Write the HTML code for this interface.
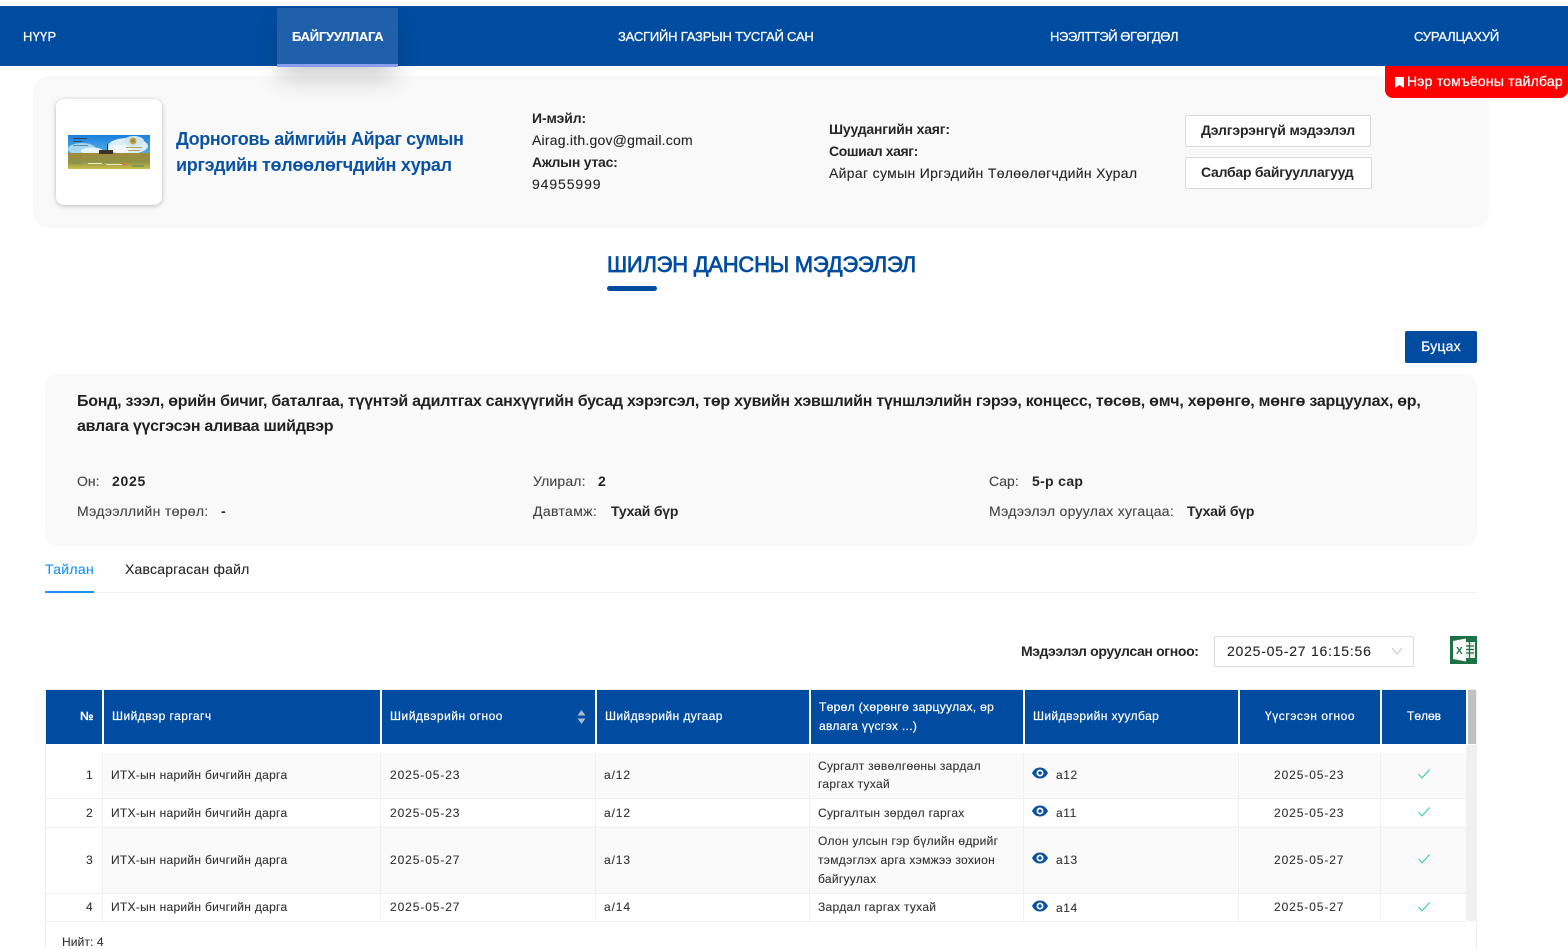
<!DOCTYPE html>
<html lang="mn"><head><meta charset="utf-8"><title>Шилэн данс</title>
<style>
html,body{margin:0;padding:0;background:#fff;width:1568px;height:949px;overflow:hidden}
body{position:relative;font-family:"Liberation Sans","DejaVu Sans",sans-serif;color:#262626;font-size:14px;-webkit-text-stroke:.12px currentColor}
.a{position:absolute}
.t{position:absolute;white-space:nowrap;line-height:20px}
.n{color:#fff;font-size:13px;top:27px;-webkit-text-stroke:.25px #fff;z-index:3}
.b{font-weight:bold;-webkit-text-stroke:0}
.th{position:absolute;top:690px;height:54px;background:#014ca0}
.h{position:absolute;color:#fff;font-size:12px;white-space:nowrap;line-height:19px;letter-spacing:.45px;-webkit-text-stroke:.2px #fff}
.d{position:absolute;font-size:12px;white-space:nowrap;line-height:19px;color:#333;letter-spacing:.29px}
.dt{letter-spacing:.9px}
.btn{position:absolute;background:#fff;border:1px solid #d9d9d9;border-radius:2px;box-sizing:border-box;font-weight:bold;font-size:14px;color:#262626;line-height:28px;white-space:nowrap;-webkit-text-stroke:0;padding-left:15px}
.v{position:absolute;width:1px;background:#f0f0f0}
.l{position:absolute;left:46px;width:1420px;height:1px;background:#f0f0f0}
.r{position:absolute;left:103px;width:1363px;background:#fafafa}
</style></head><body>

<div class="a" style="left:33px;top:76px;width:1456px;height:152px;background:#f9f9f9;border-radius:16px"></div>
<div class="a" style="left:0;top:6px;width:1568px;height:60px;background:#014ca0;z-index:1"></div>
<div class="a" style="left:277px;top:8px;width:121px;height:59px;background:#2060aa;border-bottom:3px solid #8a9ef5;box-sizing:border-box;box-shadow:0 14px 24px -2px rgba(0,0,0,.18);z-index:2"></div>
<div class="t n" style="left:23px;letter-spacing:.2px">НҮҮР</div>
<div class="t n b" style="left:292px;letter-spacing:-.25px;-webkit-text-stroke:.1px #fff">БАЙГУУЛЛАГА</div>
<div class="t n" style="left:618px;letter-spacing:-.2px">ЗАСГИЙН ГАЗРЫН ТУСГАЙ САН</div>
<div class="t n" style="left:1050px;letter-spacing:-.45px">НЭЭЛТТЭЙ ӨГӨГДӨЛ</div>
<div class="t n" style="left:1414px;letter-spacing:-.2px">СУРАЛЦАХУЙ</div>

<div class="a" style="left:1385px;top:66px;width:183px;height:32px;background:#fe0000;border-radius:0 0 8px 8px;z-index:2"></div>
<svg class="a" style="left:1395px;top:77px;z-index:3" width="9" height="11" viewBox="0 0 9 11"><path d="M0 0h9v11L4.500 8 0 11z" fill="#fff"/></svg>
<div class="t" style="left:1407px;top:71px;color:#fff;font-size:14px;letter-spacing:.2px;-webkit-text-stroke:.25px #fff;z-index:3">Нэр томъёоны тайлбар</div>

<div class="a" style="left:56px;top:99px;width:106px;height:106px;background:#fff;border-radius:8px;box-shadow:0 1px 5px rgba(0,0,0,.25)"></div>
<svg class="a" style="left:68px;top:135px" width="82" height="34" viewBox="0 0 82 34">
<defs><linearGradient id="s" x1="0" y1="0" x2="0" y2="1"><stop offset="0" stop-color="#1a80dc"/><stop offset="1" stop-color="#57b0e2"/></linearGradient>
<linearGradient id="g" x1="0" y1="0" x2="0" y2="1"><stop offset="0" stop-color="#a08a3c"/><stop offset=".55" stop-color="#8f9146"/><stop offset="1" stop-color="#cdbf48"/></linearGradient></defs>
<rect width="82" height="19" fill="url(#s)"/>
<ellipse cx="14" cy="14" rx="14" ry="6" fill="#a8d8ee"/><ellipse cx="24" cy="16" rx="11" ry="3.500" fill="#e9f4f8"/>
<ellipse cx="60" cy="11" rx="20" ry="8" fill="#dceef6"/><ellipse cx="52" cy="14" rx="12" ry="4" fill="#f2f8fa"/><ellipse cx="66" cy="6" rx="10" ry="5" fill="#cfe7f3"/>
<rect x="5" y="3" width="14" height="1" fill="#345"/><rect x="5" y="6" width="9" height="1" fill="#456"/><rect x="5" y="10" width="15" height="1" fill="#5a8ab0"/>
<rect y="18" width="82" height="16" fill="url(#g)"/>
<rect x="31" y="15" width="14" height="4" fill="#3a3428"/><rect x="39" y="9" width="1" height="7" fill="#3a3428"/>
<circle cx="65" cy="6" r="3.500" fill="#c9a43a"/><circle cx="65" cy="6" r="1.500" fill="#7c8a58"/>
<rect x="58" y="12" width="16" height="1" fill="#b5a05a"/><rect x="60" y="15" width="12" height="1" fill="#b5a05a"/>
<rect x="20" y="28" width="14" height="1" fill="#ecebd0"/><rect x="38" y="29" width="16" height="1" fill="#e7e6c8"/><rect x="54" y="28" width="4" height="2" fill="#d9773a"/><rect x="5" y="27" width="9" height="2" fill="#7d9a55"/><rect x="64" y="30" width="12" height="2" fill="#7d9a55"/>
</svg>

<div class="t b" style="left:176px;top:126px;font-size:18px;line-height:26px;color:#0a52a3;letter-spacing:-.4px">Дорноговь аймгийн Айраг сумын<br><span style="letter-spacing:-.3px">иргэдийн төлөөлөгчдийн хурал</span></div>

<div class="t b" style="left:532px;top:108px;letter-spacing:-.1px">И-мэйл:</div>
<div class="t" style="left:532px;top:130px;letter-spacing:.22px">Airag.ith.gov@gmail.com</div>
<div class="t b" style="left:532px;top:152px;letter-spacing:-.25px">Ажлын утас:</div>
<div class="t" style="left:532px;top:174px;letter-spacing:.9px">94955999</div>
<div class="t b" style="left:829px;top:119px;letter-spacing:-.2px">Шуудангийн хаяг:</div>
<div class="t b" style="left:829px;top:141px;letter-spacing:-.4px">Сошиал хаяг:</div>
<div class="t" style="left:829px;top:163px;letter-spacing:.32px">Айраг сумын Иргэдийн Төлөөлөгчдийн Хурал</div>
<div class="btn" style="left:1185px;top:115px;width:186px;height:32px;letter-spacing:-.17px">Дэлгэрэнгүй мэдээлэл</div>
<div class="btn" style="left:1185px;top:157px;width:187px;height:32px;letter-spacing:-.25px">Салбар байгууллагууд</div>

<div class="t" style="left:607px;top:252px;font-size:22px;line-height:26px;color:#014ca0;letter-spacing:-.25px;-webkit-text-stroke:.7px #014ca0">ШИЛЭН ДАНСНЫ МЭДЭЭЛЭЛ</div>
<div class="a" style="left:607px;top:286px;width:50px;height:5px;background:#014ca0;border-radius:3px"></div>

<div class="a" style="left:1405px;top:331px;width:72px;height:32px;background:#014ca0;border-radius:2px;color:#fff;font-size:14px;line-height:31px;text-align:center;letter-spacing:.2px;-webkit-text-stroke:.2px #fff">Буцах</div>

<div class="a" style="left:45px;top:374px;width:1432px;height:172px;background:#f9f9f9;border-radius:12px"></div>
<div class="t b" style="left:77px;top:389px;font-size:16px;line-height:25px;color:#222;letter-spacing:-.25px">Бонд, зээл, өрийн бичиг, баталгаа, түүнтэй адилтгах санхүүгийн бусад хэрэгсэл, төр хувийн хэвшлийн түншлэлийн гэрээ, концесс, төсөв, өмч, хөрөнгө, мөнгө зарцуулах, өр,<br>авлага үүсгэсэн аливаа шийдвэр</div>

<div class="t" style="left:77px;top:471px;color:#444">Он:</div><div class="t b" style="left:112px;top:471px;letter-spacing:.7px">2025</div>
<div class="t" style="left:533px;top:471px;color:#444;letter-spacing:.15px">Улирал:</div><div class="t b" style="left:598px;top:471px">2</div>
<div class="t" style="left:989px;top:471px;color:#444">Сар:</div><div class="t b" style="left:1032px;top:471px;letter-spacing:.3px">5-р сар</div>
<div class="t" style="left:77px;top:501px;color:#444;letter-spacing:.3px">Мэдээллийн төрөл:</div><div class="t b" style="left:221px;top:501px;letter-spacing:0">-</div>
<div class="t" style="left:533px;top:501px;color:#444;letter-spacing:.35px">Давтамж:</div><div class="t b" style="left:611px;top:501px;letter-spacing:-.2px">Тухай бүр</div>
<div class="t" style="left:989px;top:501px;color:#444;letter-spacing:.28px">Мэдээлэл оруулах хугацаа:</div><div class="t b" style="left:1187px;top:501px;letter-spacing:-.2px">Тухай бүр</div>

<div class="t" style="left:45px;top:559px;color:#1890ff;letter-spacing:.3px">Тайлан</div>
<div class="t" style="left:125px;top:559px;letter-spacing:.2px">Хавсаргасан файл</div>
<div class="a" style="left:45px;top:592px;width:1432px;height:1px;background:#f0f0f0"></div>
<div class="a" style="left:45px;top:591px;width:49px;height:2px;background:#1890ff"></div>

<div class="t b" style="left:1021px;top:641px;letter-spacing:-.35px">Мэдээлэл оруулсан огноо:</div>
<div class="a" style="left:1214px;top:636px;width:200px;height:31px;border:1px solid #d9d9d9;border-radius:2px;box-sizing:border-box"></div>
<div class="t" style="left:1227px;top:641px;letter-spacing:.77px">2025-05-27 16:15:56</div>
<svg class="a" style="left:1391px;top:647px" width="12" height="9" viewBox="0 0 12 9"><path d="M1 1l5 6 5-6" fill="none" stroke="#c4c4c4" stroke-width="1"/></svg>

<svg class="a" style="left:1450px;top:636px" width="27" height="28" viewBox="0 0 27 28">
<rect width="27" height="28" fill="#1f7246"/>
<rect x="15" y="6" width="10" height="16" fill="#e4efe8"/>
<path d="M16 10h8M16 13.500h8M16 17h8M19.500 6v16" stroke="#1f7246" stroke-width="1.200"/>
<path d="M3 5l13-2.500v23L3 23z" fill="#fff"/>
<text x="6" y="18" font-size="10" font-weight="bold" fill="#1f7246" font-family="Liberation Sans" style="-webkit-text-stroke:0">X</text>
</svg>

<!-- table frame -->
<div class="a" style="left:45px;top:689px;width:1432px;height:1px;background:#eee"></div>
<div class="a" style="left:45px;top:689px;width:1px;height:260px;background:#eee"></div>
<div class="a" style="left:1476px;top:689px;width:1px;height:260px;background:#eee"></div>

<div class="th" style="left:46px;width:56px"></div>
<div class="th" style="left:104px;width:276px"></div>
<div class="th" style="left:382px;width:213px"></div>
<div class="th" style="left:597px;width:212px"></div>
<div class="th" style="left:811px;width:212px"></div>
<div class="th" style="left:1025px;width:213px"></div>
<div class="th" style="left:1240px;width:140px"></div>
<div class="th" style="left:1382px;width:84px"></div>
<div class="a" style="left:1468px;top:690px;width:8px;height:54px;background:#c1c1c1"></div>
<div class="a" style="left:1466px;top:745px;width:10px;height:176px;background:#f0f0f0"></div>

<div class="h b" style="left:80px;top:707px;letter-spacing:0">№</div>
<div class="h" style="left:112px;top:707px">Шийдвэр гаргагч</div>
<div class="h" style="left:390px;top:707px;letter-spacing:.5px">Шийдвэрийн огноо</div>
<svg class="a" style="left:577px;top:710px" width="9" height="14" viewBox="0 0 9 14"><path d="M4.500 0L8.500 5.500H.5zM4.500 14L.5 8.500H8.500z" fill="#a9b9cf"/></svg>
<div class="h" style="left:605px;top:707px;letter-spacing:.4px">Шийдвэрийн дугаар</div>
<div class="h" style="left:819px;top:698px;letter-spacing:.33px">Төрөл (хөрөнгө зарцуулах, өр<br>авлага үүсгэх ...)</div>
<div class="h" style="left:1033px;top:707px;letter-spacing:.42px">Шийдвэрийн хуулбар</div>
<div class="h" style="left:1265px;top:707px;letter-spacing:.55px">Үүсгэсэн огноо</div>
<div class="h" style="left:1407px;top:707px;letter-spacing:0">Төлөв</div>

<!-- row backgrounds -->
<div class="r" style="top:753px;height:45px"></div>
<div class="r" style="top:828px;height:65px"></div>
<div class="l" style="top:798px"></div>
<div class="l" style="top:827px"></div>
<div class="l" style="top:893px"></div>
<div class="l" style="top:921px"></div>
<div class="v" style="left:102px;top:753px;height:168px"></div>
<div class="v" style="left:380px;top:753px;height:168px"></div>
<div class="v" style="left:595px;top:753px;height:168px"></div>
<div class="v" style="left:809px;top:753px;height:168px"></div>
<div class="v" style="left:1023px;top:753px;height:168px"></div>
<div class="v" style="left:1238px;top:753px;height:168px"></div>
<div class="v" style="left:1380px;top:753px;height:168px"></div>

<!-- row 1 -->
<div class="d" style="left:86px;top:766px">1</div>
<div class="d" style="left:111px;top:766px">ИТХ-ын нарийн бичгийн дарга</div>
<div class="d dt" style="left:390px;top:766px">2025-05-23</div>
<div class="d dt" style="left:604px;top:766px">а/12</div>
<div class="d" style="left:818px;top:757px;line-height:18px">Сургалт зөвөлгөөны зардал<br>гаргах тухай</div>
<div class="d" style="left:1056px;top:766px;letter-spacing:.6px">а12</div>
<div class="d dt" style="left:1274px;top:766px">2025-05-23</div>
<!-- row 2 -->
<div class="d" style="left:86px;top:804px">2</div>
<div class="d" style="left:111px;top:804px">ИТХ-ын нарийн бичгийн дарга</div>
<div class="d dt" style="left:390px;top:804px">2025-05-23</div>
<div class="d dt" style="left:604px;top:804px">а/12</div>
<div class="d" style="left:818px;top:804px">Сургалтын зөрдөл гаргах</div>
<div class="d" style="left:1056px;top:804px;letter-spacing:.6px">а11</div>
<div class="d dt" style="left:1274px;top:804px">2025-05-23</div>
<!-- row 3 -->
<div class="d" style="left:86px;top:851px">3</div>
<div class="d" style="left:111px;top:851px">ИТХ-ын нарийн бичгийн дарга</div>
<div class="d dt" style="left:390px;top:851px">2025-05-27</div>
<div class="d dt" style="left:604px;top:851px">а/13</div>
<div class="d" style="left:818px;top:832px">Олон улсын гэр бүлийн өдрийг<br>тэмдэглэх арга хэмжээ зохион<br>байгуулах</div>
<div class="d" style="left:1056px;top:851px;letter-spacing:.6px">а13</div>
<div class="d dt" style="left:1274px;top:851px">2025-05-27</div>
<!-- row 4 -->
<div class="d" style="left:86px;top:898px">4</div>
<div class="d" style="left:111px;top:898px">ИТХ-ын нарийн бичгийн дарга</div>
<div class="d dt" style="left:390px;top:898px">2025-05-27</div>
<div class="d dt" style="left:604px;top:898px">а/14</div>
<div class="d" style="left:818px;top:898px">Зардал гаргах тухай</div>
<div class="d" style="left:1056px;top:899px;letter-spacing:.6px">а14</div>
<div class="d dt" style="left:1274px;top:898px">2025-05-27</div>

<!-- eye icons -->
<svg class="a" style="left:1032px;top:767px" width="16" height="12" viewBox="0 0 16 12"><path fill-rule="evenodd" d="M0 6C2 2 5 .5 8 .5S14 2 16 6c-2 4-5 5.500-8 5.500S2 10 0 6zm8 3.500a3.500 3.500 0 1 0 0-7 3.500 3.500 0 0 0 0 7zm0-1.700a1.800 1.800 0 1 1 0-3.600 1.800 1.800 0 0 1 0 3.600z" fill="#0a4fa0"/></svg>
<svg class="a" style="left:1032px;top:805px" width="16" height="12" viewBox="0 0 16 12"><path fill-rule="evenodd" d="M0 6C2 2 5 .5 8 .5S14 2 16 6c-2 4-5 5.500-8 5.500S2 10 0 6zm8 3.500a3.500 3.500 0 1 0 0-7 3.500 3.500 0 0 0 0 7zm0-1.700a1.800 1.800 0 1 1 0-3.600 1.800 1.800 0 0 1 0 3.600z" fill="#0a4fa0"/></svg>
<svg class="a" style="left:1032px;top:852px" width="16" height="12" viewBox="0 0 16 12"><path fill-rule="evenodd" d="M0 6C2 2 5 .5 8 .5S14 2 16 6c-2 4-5 5.500-8 5.500S2 10 0 6zm8 3.500a3.500 3.500 0 1 0 0-7 3.500 3.500 0 0 0 0 7zm0-1.700a1.800 1.800 0 1 1 0-3.600 1.800 1.800 0 0 1 0 3.600z" fill="#0a4fa0"/></svg>
<svg class="a" style="left:1032px;top:900px" width="16" height="12" viewBox="0 0 16 12"><path fill-rule="evenodd" d="M0 6C2 2 5 .5 8 .5S14 2 16 6c-2 4-5 5.500-8 5.500S2 10 0 6zm8 3.500a3.500 3.500 0 1 0 0-7 3.500 3.500 0 0 0 0 7zm0-1.700a1.800 1.800 0 1 1 0-3.600 1.800 1.800 0 0 1 0 3.600z" fill="#0a4fa0"/></svg>

<!-- checks -->
<svg class="a" style="left:1418px;top:769px" width="12" height="10" viewBox="0 0 12 10"><path d="M.5 5l3.500 4L11.500.5" fill="none" stroke="#2fd08f" stroke-width="1"/></svg>
<svg class="a" style="left:1418px;top:807px" width="12" height="10" viewBox="0 0 12 10"><path d="M.5 5l3.500 4L11.500.5" fill="none" stroke="#2fd08f" stroke-width="1"/></svg>
<svg class="a" style="left:1418px;top:854px" width="12" height="10" viewBox="0 0 12 10"><path d="M.5 5l3.500 4L11.500.5" fill="none" stroke="#2fd08f" stroke-width="1"/></svg>
<svg class="a" style="left:1418px;top:902px" width="12" height="10" viewBox="0 0 12 10"><path d="M.5 5l3.500 4L11.500.5" fill="none" stroke="#2fd08f" stroke-width="1"/></svg>

<div class="d" style="left:62px;top:933px;letter-spacing:.1px">Нийт: 4</div>
</body></html>
